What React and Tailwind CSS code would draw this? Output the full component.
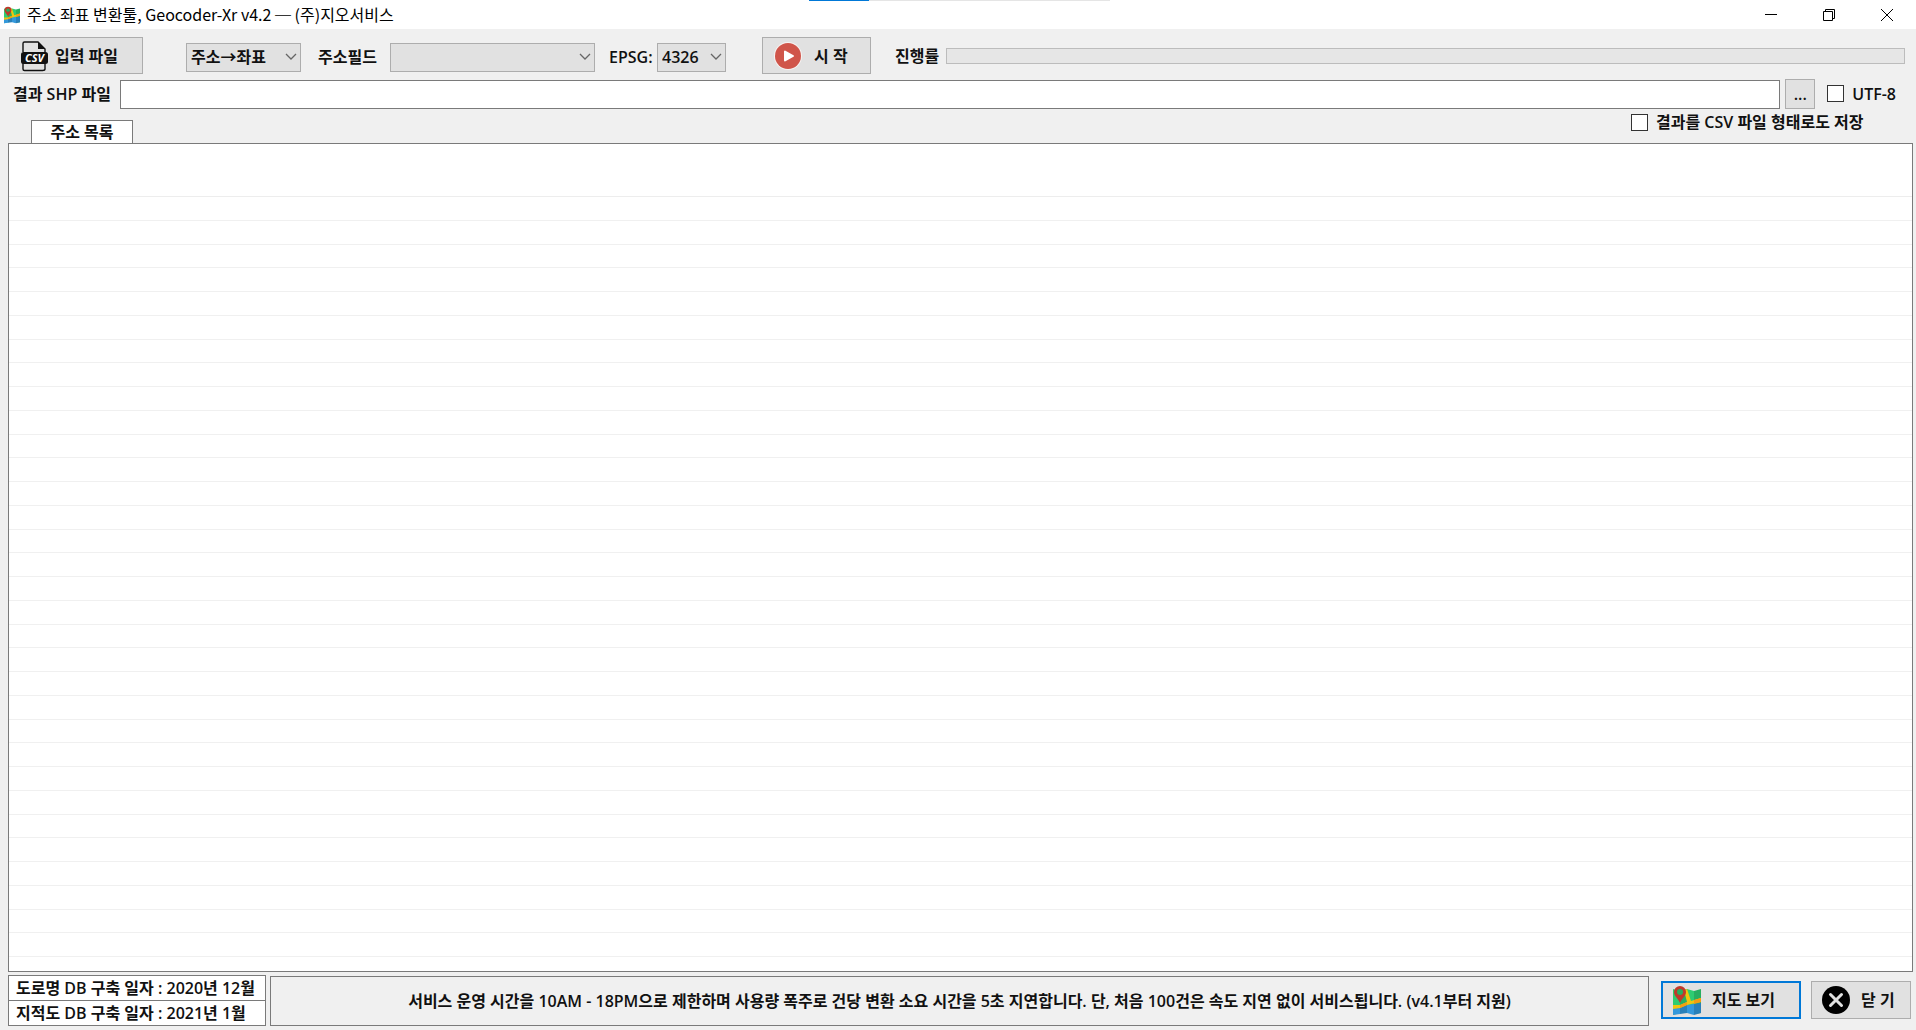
import React, { useState } from 'react';

const MapIcon = ({ className }) => (
    <svg viewBox="0 0 28 29" className={className} aria-hidden="true">
        <path d="M0 3l7 2v22l-7 2z" fill="#2ecc71" />
        <path d="M7 5l7-2v23l-7 1z" fill="#27ae60" />
        <path d="M14 3l7 2v23l-7-2z" fill="#2ecc71" />
        <path d="M21 5l7-2v24l-7 1z" fill="#27ae60" />
        <path d="M0 22l7-1v7l-7 1z" fill="#3498db" />
        <path d="M7 21l7-2v8l-7 1z" fill="#2980b9" />
        <path d="M14 19l7-1v11l-7-2z" fill="#3498db" />
        <path d="M21 18l7-1v10l-7 2z" fill="#2980b9" />
        <path d="M0 19l7 0 7-3-3-12 3-1 4 12 10-3v4l-10 2-4 1-7 3-7 1z" fill="#f1c40f" />
        <path d="M7 19l7-3v3l-7 3zM21 14l7-2v4l-7 2z" fill="#f39c12" />
        <path d="M7 0a6 6 0 0 1 6 6c0 4-4 6-6 11C5 12 1 10 1 6a6 6 0 0 1 6-6z" fill="#c0392b" />
        <circle cx="7" cy="6" r="3" fill="#27ae60" />
    </svg>
);

const CsvIcon = () => (
    <svg viewBox="0 0 28 32" className="h-8 w-7 shrink-0" aria-hidden="true">
        <path d="M3 12V3.500Q3 2 4.500 2H18l7 7v3M3 22v7q0 1.500 1.500 1.500h18Q25 30.500 25 29v-7" fill="none" stroke="#111" strokeWidth="1.400" />
        <path d="M18 2l7 7h-7z" fill="#111" />
        <rect x="1" y="12" width="27" height="12" rx="2.500" fill="#111" />
        <text x="14.500" y="22" textAnchor="middle" fill="#fff" fontSize="11" fontWeight="700" fontStyle="italic" fontFamily="Open Sans, sans-serif">CSV</text>
    </svg>
);

const PlayIcon = () => (
    <svg viewBox="0 0 28 28" className="size-7 shrink-0" aria-hidden="true">
        <circle cx="14" cy="14" r="14" fill="#f7f2f1" />
        <circle cx="14" cy="14" r="13" fill="#d0554a" />
        <path d="M11 9.500v9L19 14z" fill="#fff" stroke="#fff" strokeWidth="2" strokeLinejoin="round" />
    </svg>
);

const CloseIcon = () => (
    <svg viewBox="0 0 28 28" className="size-7 shrink-0" aria-hidden="true">
        <circle cx="14" cy="14" r="14" fill="#000" />
        <path d="M8.500 8.500l11 11M19.500 8.500l-11 11" stroke="#e1e1e1" strokeWidth="3" strokeLinecap="round" />
    </svg>
);

const Select = ({ id, label, className, children }) => (
    <div className={`grid items-center ${className}`}>
        <select id={id} aria-label={label} className="col-start-1 row-start-1 h-[29px] w-full appearance-none border border-[#adadad] bg-[#e1e1e1] px-1">
            {children}
        </select>
        <svg viewBox="0 0 12 8" className="pointer-events-none col-start-1 row-start-1 mr-1 h-2 w-3 justify-self-end" aria-hidden="true">
            <path d="M1 1l5 5 5-5" fill="none" stroke="#666" strokeWidth="1.300" />
        </svg>
    </div>
);

const Checkbox = ({ label, className = '' }) => (
    <label className={`flex items-center gap-2 whitespace-nowrap ${className}`}>
        <input type="checkbox" className="size-[17px] appearance-none border border-[#333] bg-white checked:bg-[#0078d7]" />
        {label}
    </label>
);

const EMPTY_ROWS = Array.from({ length: 32 }, (_, i) => i);

const App = () => {
    const [outputPath, setOutputPath] = useState('');

    return (
        <div className="flex h-screen flex-col bg-[#f0f0f0] font-['Open_Sans','Noto_Sans_CJK_KR',sans-serif] text-base leading-5 font-semibold text-[#111]">
            {/* Docking strip over the title bar */}
            <div className="absolute top-0 left-1/2 ml-[-149px] flex h-px w-[301px]">
                <div className="w-[60px] bg-[#0078d7]" />
                <div className="flex-1 bg-[#e5e5e5]" />
            </div>

            <header className="flex h-[29px] shrink-0 items-center bg-white pl-1 font-['Noto_Sans_CJK_KR',sans-serif] font-normal text-black">
                <MapIcon className="mr-[7px] h-[18px] w-4" />
                <h1 className="pb-px">주소 좌표 변환툴, Geocoder-Xr v4.2 ─ (주)지오서비스</h1>
                <div className="ml-auto flex h-full">
                    <button type="button" aria-label="최소화" className="flex w-[58px] items-center justify-center">
                        <svg viewBox="0 0 12 12" className="size-3"><path d="M0 5.500h12" stroke="#000" /></svg>
                    </button>
                    <button type="button" aria-label="이전 크기로 복원" className="flex w-[58px] items-center justify-center">
                        <svg viewBox="0 0 12 12" className="size-3"><path d="M.5 2.500h9v9h-9zM2.500 2.500v-2h9v9h-2" fill="none" stroke="#000" /></svg>
                    </button>
                    <button type="button" aria-label="창 닫기" className="flex w-[58px] items-center justify-center">
                        <svg viewBox="0 0 12 12" className="size-3"><path d="M0 0l12 12M12 0L0 12" stroke="#000" /></svg>
                    </button>
                </div>
            </header>

            <div className="mt-2 flex h-[37px] shrink-0 items-center pr-[11px] pl-[9px]">
                <button type="button" className="flex h-full w-[134px] items-center gap-[7px] border border-[#adadad] bg-[#e1e1e1] pl-[10px]">
                    <CsvIcon />
                    입력 파일
                </button>
                <Select id="mode" label="변환 방식" className="mt-[3px] ml-[43px] w-[115px]">
                    <option>주소→좌표</option>
                </Select>
                <label htmlFor="field" className="mt-[2px] ml-[17px] w-[72px] whitespace-nowrap">주소필드</label>
                <Select id="field" className="mt-[3px] w-[205px]" />
                <label htmlFor="epsg" className="mt-[2px] ml-[14px] w-12">EPSG:</label>
                <Select id="epsg" className="mt-[3px] w-[69px]">
                    <option>4326</option>
                </Select>
                <button type="button" className="ml-9 flex h-full w-[109px] items-center gap-3 border border-[#adadad] bg-[#e1e1e1] pl-[11px]">
                    <PlayIcon />
                    시 작
                </button>
                <span className="ml-6 w-[51px] whitespace-nowrap">진행률</span>
                <div role="progressbar" aria-label="진행률" aria-valuenow={0} className="h-4 flex-1 border border-[#bcbcbc] bg-[#e6e6e6]" />
            </div>

            <div className="mt-[5px] flex h-[30px] shrink-0 items-center pr-5 pl-[13px]">
                <label htmlFor="output" className="w-[107px] pb-px whitespace-nowrap">결과 SHP 파일</label>
                <input
                    id="output"
                    type="text"
                    value={outputPath}
                    onChange={(e) => setOutputPath(e.target.value)}
                    className="h-[29px] min-w-0 flex-1 border border-[#7a7a7a] bg-white px-1 outline-none"
                />
                <button type="button" className="mr-3 ml-[5px] h-full w-[30px] border border-[#adadad] bg-[#e1e1e1]">...</button>
                <Checkbox label="UTF-8" className="pb-px" />
            </div>

            <div className="flex h-[34px] shrink-0 items-end justify-between pr-12 pl-[31px]">
                <button type="button" className="h-[23px] w-[102px] border border-b-0 border-[#7a7a7a] bg-white">주소 목록</button>
                <Checkbox label="결과를 CSV 파일 형태로도 저장" className="mb-[11px] w-[237px]" />
            </div>

            <main className="mr-[3px] ml-2 flex min-h-0 flex-1 flex-col border border-[#7a7a7a] bg-white">
                <table className="flex min-h-0 flex-1 flex-col">
                    <thead className="block h-[53px] shrink-0 border-b border-[#ededed]" />
                    <tbody className="flex min-h-0 flex-1 flex-col">
                        {EMPTY_ROWS.map((row) => (
                            <tr key={row} className="block min-h-0 flex-1 border-b border-[#f0f0f0]" />
                        ))}
                    </tbody>
                </table>
                <div className="h-[14px] shrink-0" />
            </main>

            <footer className="mt-[3px] mb-1 flex h-[51px] shrink-0 items-center pr-[5px] pl-2">
                <div className="flex h-full w-[258px] flex-col divide-y divide-[#7a7a7a] border border-[#7a7a7a] bg-white whitespace-nowrap">
                    <p className="flex flex-1 items-center pl-[7px]">도로명 DB 구축 일자 : 2020년 12월</p>
                    <p className="flex flex-1 items-center pl-[7px]">지적도 DB 구축 일자 : 2021년 1월</p>
                </div>
                <p className="ml-1 flex h-[50px] flex-1 items-center justify-center self-end border border-[#7a7a7a]">
                    서비스 운영 시간을 10AM - 18PM으로 제한하며 사용량 폭주로 건당 변환 소요 시간을 5초 지연합니다. 단, 처음 100건은 속도 지연 없이 서비스됩니다. (v4.1부터 지원)
                </p>
                <button type="button" className="mb-px ml-3 flex h-[38px] w-[140px] items-center gap-[11px] border-2 border-[#0078d7] bg-[#e1e1e1] pl-[10px]">
                    <MapIcon className="h-[29px] w-7" />
                    지도 보기
                </button>
                <button type="button" className="mb-px ml-[10px] flex h-[38px] w-[100px] items-center gap-[11px] border border-[#adadad] bg-[#e1e1e1] pl-[10px]">
                    <CloseIcon />
                    닫 기
                </button>
            </footer>
        </div>
    );
};

export default App;
